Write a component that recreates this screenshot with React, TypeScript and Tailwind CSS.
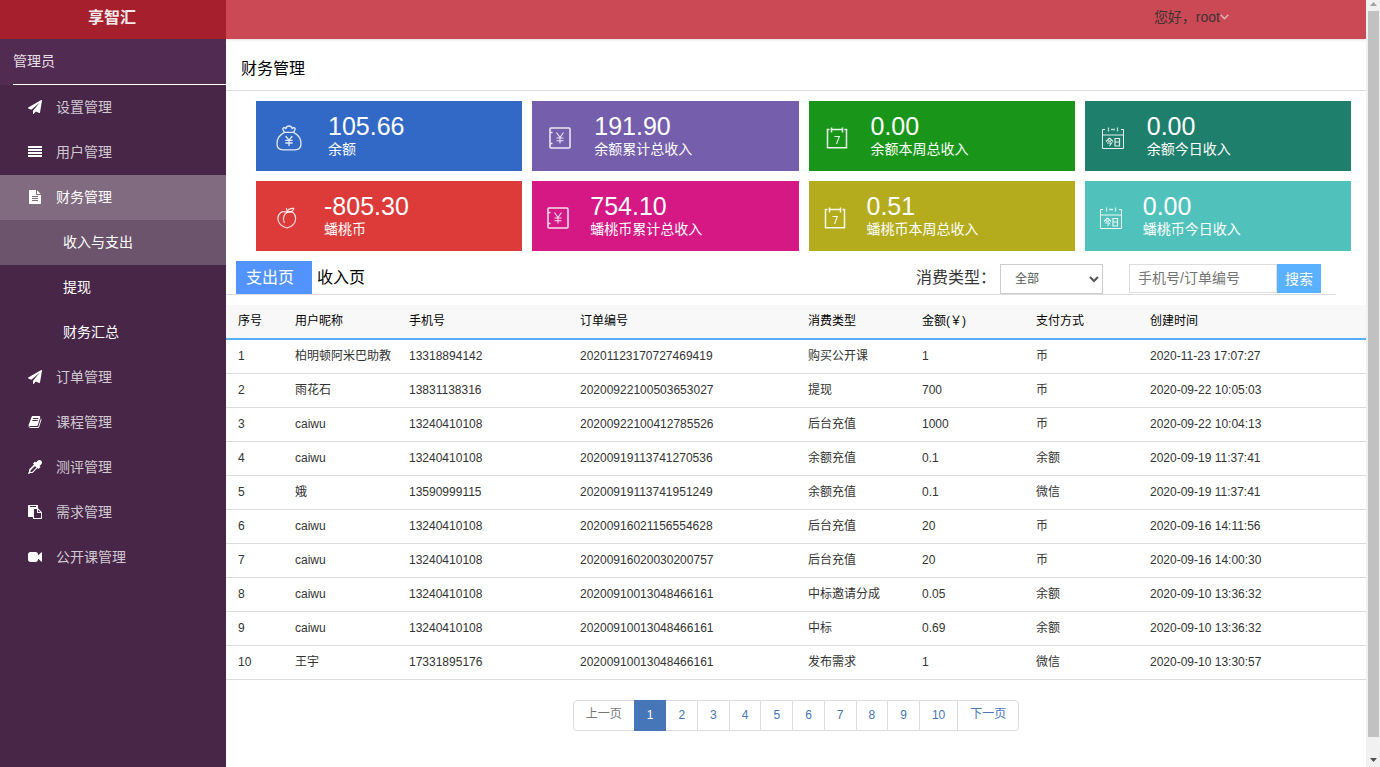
import { useState } from "react"
import type { ReactNode } from "react"

type MenuItem = { label: string; icon: ReactNode; children?: string[] }

function Glyph({ d }: { d: string }) {
    return (
        <svg viewBox="0 0 1792 1792" className="h-4 w-4 shrink-0 p-px" fill="#fff" aria-hidden="true">
            <path d={d} />
        </svg>
    )
}

const plane =
    "M1764 11q33 24 27 64l-256 1536q-5 29-32 45-14 8-31 8-11 0-24-5l-453-185-242 295q-18 23-49 23-13 0-22-4-19-7-30.5-23.5t-11.5-36.5v-349l864-1059-1069 925-395-162q-37-14-40-55-2-40 32-59l1664-960q15-9 32-9 20 0 36 11z"
const lines = "M0 128h1792v256H0zM0 512h1792v256H0zM0 896h1792v256H0zM0 1280h1792v256H0z"
const fileText =
    "M1596 476q14 14 28 36h-472v-472q22 14 36 28zm-476 164h544v1056q0 40-28 68t-68 28h-1344q-40 0-68-28t-28-68v-1600q0-40 28-68t68-28h800v544q0 40 28 68t68 28zm160 736v-64q0-14-9-23t-23-9h-704q-14 0-23 9t-9 23v64q0 14 9 23t23 9h704q14 0 23-9t9-23zm0-256v-64q0-14-9-23t-23-9h-704q-14 0-23 9t-9 23v64q0 14 9 23t23 9h704q14 0 23-9t9-23zm0-256v-64q0-14-9-23t-23-9h-704q-14 0-23 9t-9 23v64q0 14 9 23t23 9h704q14 0 23-9t9-23z"
const book =
    "M1703 478q40 57 18 129l-275 906q-19 64-76.5 107.5t-122.5 43.5h-923q-77 0-148.5-53.5t-99.5-131.5q-24-67-2-127 0-4 3-27t4-37q1-8-3-21.5t-3-19.5q2-11 8-21t16.5-23.5 16.5-23.5q23-38 45-91.5t30-91.5q3-10 .5-30t-.5-28q3-11 17-28t17-23q21-36 42-92t25-90q1-9-2.5-32t.5-28q4-13 22-30.5t22-22.5q19-26 42.5-84.5t27.5-96.5q1-8-3-25.5t-2-26.5q2-8 9-18t18-23 17-21q8-12 16.500-30.500t15-35 16-36 19.500-32 26.500-23.500 36-11.500 47.500 5.500l-1 3q38-9 51-9h761q74 0 114 56t18 130l-274 906q-36 119-71.500 153.500t-128.500 34.500h-869q-27 0-38 15-11 16-1 43 24 70 144 70h923q29 0 56-15.500t35-41.500l300-987q7-22 5-57 38 15 59 43zm-1064 2q-4 13 2 22.500t20 9.500h608q13 0 25.500-9.500t16.500-22.500l21-64q4-13-2-22.500t-20-9.500h-608q-13 0-25.500 9.500t-16.500 22.500zm-83 256q-4 13 2 22.500t20 9.500h608q13 0 25.500-9.500t16.500-22.500l21-64q4-13-2-22.500t-20-9.500h-608q-13 0-25.500 9.500t-16.500 22.500z"
const dropper =
    "M1698 94q94 94 94 226.500t-94 225.500l-225 223 104 104q10 10 10 23t-10 23l-210 210q-10 10-23 10t-23-10l-105-105-603 603q-37 37-90 37h-203l-256 128-64-64 128-256v-203q0-53 37-90l603-603-105-105q-10-10-10-23t10-23l210-210q10-10 23-10t23 10l104 104 223-225q93-94 225.500-94t226.500 94zm-1186 1442l576-576-192-192-576 576v192h192z"
const paste =
    "M768 1664h896v-640h-416q-40 0-68-28t-28-68v-416h-384v1152zm256-1440v-64q0-13-9.500-22.500t-22.500-9.500h-704q-13 0-22.500 9.500t-9.500 22.500v64q0 13 9.500 22.500t22.500 9.500h704q13 0 22.500-9.500t9.500-22.500zm256 672h299l-299-299v299zm512 128v672q0 40-28 68t-68 28h-960q-40 0-68-28t-28-68v-160h-544q-40 0-68-28t-28-68v-1344q0-40 28-68t68-28h1088q40 0 68 28t28 68v328q21 13 36 28l408 408q28 28 48 76t20 88z"
const video =
    "M1792 352v1088q0 42-39 59-13 5-25 5-27 0-45-19l-403-403v166q0 119-84.500 203.500t-203.500 84.500h-704q-119 0-203.500-84.500t-84.500-203.500v-704q0-119 84.500-203.500t203.500-84.500h704q119 0 203.500 84.500t84.500 203.500v165l403-402q18-19 45-19 12 0 25 5 39 17 39 59z"

const menu: MenuItem[] = [
    { label: "设置管理", icon: <Glyph d={plane} /> },
    { label: "用户管理", icon: <Glyph d={lines} /> },
    { label: "财务管理", icon: <Glyph d={fileText} />, children: ["收入与支出", "提现", "财务汇总"] },
    { label: "订单管理", icon: <Glyph d={plane} /> },
    { label: "课程管理", icon: <Glyph d={book} /> },
    { label: "测评管理", icon: <Glyph d={dropper} /> },
    { label: "需求管理", icon: <Glyph d={paste} /> },
    { label: "公开课管理", icon: <Glyph d={video} /> },
]

function BagIcon() {
    return (
        <svg viewBox="0 0 26 26" className="h-[26px] w-[26px]" fill="none" stroke="#fff" strokeOpacity="0.85" strokeWidth="1.3" strokeLinecap="round" strokeLinejoin="round" aria-hidden="true">
            <path d="M8.500 7.400C7.800 5.500 6.200 4.600 6.900 3.300c.8-1 2.200-.6 3 .3C10.300 1.700 11.500 1 13 1s2.700.7 3.100 2.600c.8-.9 2.200-1.300 3-.3.700 1.300-.900 2.200-1.600 4.100zM8.500 7.400C4.500 9.500 1 13.500 1 18.500c0 4 2.500 6.300 6 6.300h12c3.500 0 6-2.300 6-6.300 0-5-3.500-9-7.500-11.100" />
            <path d="m10 11.500 3 3.700 3-3.700M13 15.200v5.300M9.800 15.300h6.400M9.800 18h6.400" />
        </svg>
    )
}

function PeachIcon() {
    return (
        <svg viewBox="0 0 22 24" className="h-[22px] w-5" fill="none" stroke="#fff" strokeOpacity="0.85" strokeWidth="1.3" strokeLinecap="round" strokeLinejoin="round" aria-hidden="true">
            <path d="M11 5.800C5.500 3.300 1 7 1 12.500c0 5.200 4.500 9.300 10 10.500 5.500-1.200 9.500-5.300 9.500-10.500C20.500 7 16.500 3.500 11 5.800z" />
            <path d="M11.500 5.700C7.500 7.500 6 12.500 8 17M11.500 5.700 10.300 1.500M11.500 5.500C12 2.700 15 1.200 18.500 1.500c-1 3-3.500 4.500-7 4z" />
        </svg>
    )
}

function SafeIcon() {
    return (
        <svg viewBox="0 0 22 22" className="h-[22px] w-[22px]" fill="none" stroke="#fff" strokeOpacity="0.85" aria-hidden="true">
            <rect x="1" y="1" width="20" height="20" rx="1" strokeWidth="1.600" />
            <path d="M1.500 5.500h2M1.500 16.500h2" strokeWidth="1.500" />
            <path d="m7.500 5.500 3.500 5 3.500-5M11 10.500v6M7.500 11h7M7.500 13.700h7" strokeWidth="1.100" />
        </svg>
    )
}

function WeekIcon() {
    return (
        <svg viewBox="0 0 22 22" className="h-[22px] w-[22px]" fill="none" stroke="#fff" strokeOpacity="0.9" aria-hidden="true">
            <path d="M3.500 2.500H1.500v18.300h19V2.500h-2M5.500 2.500h11M5.500.500v5M16.500.500v5" strokeWidth="1.500" />
            <path d="M8.500 9.500h4.800L10.500 17" strokeWidth="1.100" />
        </svg>
    )
}

function TodayIcon() {
    return (
        <svg viewBox="0 0 22 22" className="h-[22px] w-[22px]" fill="none" stroke="#fff" aria-hidden="true">
            <path d="M3 2.500H.500v19h21v-19H19" strokeOpacity=".9" />
            <path d="M6.500.500v4M9 2.500h4M15.500.500v4" strokeOpacity=".7" strokeWidth="1.300" />
            <path d="M1 8h20" strokeOpacity=".5" strokeWidth="1.800" />
            <path d="M7.500 11 4 14.500M7.500 11l3.500 3.500M6 14.200h3M5 16h4.500l-2 3M13 11.500h4.500V19H13zM13 15h4.500" strokeOpacity=".85" strokeWidth="1.200" />
        </svg>
    )
}

const cards = [
    { value: "105.66", label: "余额", icon: <BagIcon />, bg: "bg-[#3369c6]", slot: "w-[72px]" },
    { value: "191.90", label: "余额累计总收入", icon: <SafeIcon />, bg: "bg-[#755fac]", slot: "w-[62px]" },
    { value: "0.00", label: "余额本周总收入", icon: <WeekIcon />, bg: "bg-[#19961a]", slot: "w-[62px]" },
    { value: "0.00", label: "余额今日收入", icon: <TodayIcon />, bg: "bg-[#1f7f6d]", slot: "w-[62px]" },
    { value: "-805.30", label: "蟠桃币", icon: <PeachIcon />, bg: "bg-[#dc3b3a]", slot: "w-[68px]" },
    { value: "754.10", label: "蟠桃币累计总收入", icon: <SafeIcon />, bg: "bg-[#d61885]", slot: "w-[58px]" },
    { value: "0.51", label: "蟠桃币本周总收入", icon: <WeekIcon />, bg: "bg-[#b5ac1d]", slot: "w-[58px]" },
    { value: "0.00", label: "蟠桃币今日收入", icon: <TodayIcon />, bg: "bg-[#51c2bb]", slot: "w-[58px]" },
]

const columns = [
    { title: "序号", width: "w-[5%]" },
    { title: "用户昵称", width: "w-[10%]" },
    { title: "手机号", width: "w-[15%]" },
    { title: "订单编号", width: "w-[20%]" },
    { title: "消费类型", width: "w-[10%]" },
    { title: "金额(￥)", width: "w-[10%]" },
    { title: "支付方式", width: "w-[10%]" },
    { title: "创建时间", width: "w-[20%]" },
]

const rows = [
    ["1", "柏明顿阿米巴助教", "13318894142", "20201123170727469419", "购买公开课", "1", "币", "2020-11-23 17:07:27"],
    ["2", "雨花石", "13831138316", "20200922100503653027", "提现", "700", "币", "2020-09-22 10:05:03"],
    ["3", "caiwu", "13240410108", "20200922100412785526", "后台充值", "1000", "币", "2020-09-22 10:04:13"],
    ["4", "caiwu", "13240410108", "20200919113741270536", "余额充值", "0.1", "余额", "2020-09-19 11:37:41"],
    ["5", "娥", "13590999115", "20200919113741951249", "余额充值", "0.1", "微信", "2020-09-19 11:37:41"],
    ["6", "caiwu", "13240410108", "20200916021156554628", "后台充值", "20", "币", "2020-09-16 14:11:56"],
    ["7", "caiwu", "13240410108", "20200916020030200757", "后台充值", "20", "币", "2020-09-16 14:00:30"],
    ["8", "caiwu", "13240410108", "20200910013048466161", "中标邀请分成", "0.05", "余额", "2020-09-10 13:36:32"],
    ["9", "caiwu", "13240410108", "20200910013048466161", "中标", "0.69", "余额", "2020-09-10 13:36:32"],
    ["10", "王宇", "17331895176", "20200910013048466161", "发布需求", "1", "微信", "2020-09-10 13:30:57"],
]

function Sidebar() {
    return (
        <nav className="w-[226px] shrink-0 bg-[#482648] text-sm">
            <div className="bg-[#522b52] pl-[13px] text-[#e6dfe6]">
                <div className="h-[46px] border-b border-white leading-[45px]">管理员</div>
            </div>
            <ul>
                {menu.map((item) => (
                    <li key={item.label}>
                        <a
                            href="#"
                            className={`flex h-[45px] items-center gap-[13px] pb-0.5 pl-[27px] ${item.children ? "bg-[#816b81] text-white" : "text-[#d1c9d1]"}`}
                        >
                            {item.icon}
                            {item.label}
                        </a>
                        {item.children && (
                            <ul>
                                {item.children.map((child, i) => (
                                    <li key={child}>
                                        <a
                                            href="#"
                                            className={`flex h-[45px] items-center pb-0.5 pl-[63px] text-white ${i === 0 ? "bg-[#6d546d]" : ""}`}
                                        >
                                            {child}
                                        </a>
                                    </li>
                                ))}
                            </ul>
                        )}
                    </li>
                ))}
            </ul>
        </nav>
    )
}

function StatCards() {
    return (
        <div className="grid grid-cols-4 gap-[10px] pt-[10px] pr-[15px] pl-[30px]">
            {cards.map((card) => (
                <div key={card.label} className={`flex h-[70px] items-center text-white ${card.bg}`}>
                    <div className={`flex shrink-0 justify-center pt-1 pr-1.5 ${card.slot}`}>{card.icon}</div>
                    <div>
                        <div className="text-[25px] leading-[26px]">{card.value}</div>
                        <div className="text-sm leading-5">{card.label}</div>
                    </div>
                </div>
            ))}
        </div>
    )
}

function Toolbar() {
    const [keyword, setKeyword] = useState("")

    return (
        <div className="mt-[10px] mr-[30px] flex h-[34px] items-start justify-between border-b border-[#ddd] pl-[10px]">
            <div className="flex text-base">
                <button className="h-[33px] w-[76px] bg-[#5393ff] pl-[10px] text-left text-white">支出页</button>
                <button className="h-[33px] px-[5px] text-black">收入页</button>
            </div>
            <div className="flex items-start pt-[3px] pr-[15px]">
                <label htmlFor="type" className="pr-1 text-base leading-[27px] text-[#333]">
                    消费类型：
                </label>
                <select id="type" className="h-[30px] w-[103px] border border-[#ccc] bg-white pl-[10px] text-xs text-[#555]">
                    <option>全部</option>
                    <option>购买公开课</option>
                    <option>提现</option>
                </select>
                <input
                    aria-label="手机号/订单编号"
                    placeholder="手机号/订单编号"
                    value={keyword}
                    onChange={(e) => setKeyword(e.target.value)}
                    className="ml-[26px] h-[29px] w-[148px] border border-[#ddd] px-2 pb-0.5 text-sm text-[#333] placeholder:text-[#757575]"
                />
                <button className="h-[29px] w-11 bg-[#5ab1ff] text-sm text-white">搜索</button>
            </div>
        </div>
    )
}

function OrderTable() {
    return (
        <table className="mt-[10px] w-full table-fixed text-left text-xs text-[#333]">
            <thead>
                <tr className="h-[34px] border-b-2 border-[#5aaffb] bg-[#f8f8f8] text-black">
                    {columns.map((col) => (
                        <th key={col.title} className={`pb-0.5 pl-3 font-normal whitespace-nowrap ${col.width}`}>
                            {col.title}
                        </th>
                    ))}
                </tr>
            </thead>
            <tbody>
                {rows.map((row) => (
                    <tr key={row[0]} className="h-[34px] border-b border-[#ddd]">
                        {row.map((cell, i) => (
                            <td key={i} className="pl-3 whitespace-nowrap">
                                {cell}
                            </td>
                        ))}
                    </tr>
                ))}
            </tbody>
        </table>
    )
}

function Pagination() {
    const [page, setPage] = useState(1)
    const link = "h-[31px] border border-[#ddd] px-3 pb-0.5 text-xs"

    return (
        <div className="flex justify-center py-5">
            <button className={`${link} rounded-l text-[#777]`} onClick={() => setPage(Math.max(1, page - 1))}>
                上一页
            </button>
            {[1, 2, 3, 4, 5, 6, 7, 8, 9, 10].map((n) => (
                <button
                    key={n}
                    onClick={() => setPage(n)}
                    className={`-ml-px h-[31px] border px-3 text-xs ${n === page ? "z-10 border-[#4675b8] bg-[#4675b8] text-white" : "border-[#ddd] text-[#4675b8]"}`}
                >
                    {n}
                </button>
            ))}
            <button className={`${link} -ml-px rounded-r text-[#4675b8]`} onClick={() => setPage(Math.min(10, page + 1))}>
                下一页
            </button>
        </div>
    )
}

function ScrollRail() {
    return (
        <div className="flex w-[14px] shrink-0 flex-col items-center bg-[#f1f1f1]" aria-hidden="true">
            <svg viewBox="0 0 14 11" className="h-[11px] w-[14px]" fill="#a3a3a3">
                <path d="M4 6h7L7.500 2z" />
            </svg>
            <div className="ml-px w-[11px] flex-1 bg-[#c1c1c1]" />
            <svg viewBox="0 0 14 30" className="h-[30px] w-[14px]" fill="#505050">
                <path d="M4 21h7l-3.500 4z" />
            </svg>
        </div>
    )
}

export default function App() {
    return (
        <div className="flex h-screen bg-white font-['Liberation_Sans','Noto_Sans_CJK_SC',sans-serif]">
            <div className="flex min-w-0 flex-1 flex-col">
                <header className="flex h-[39px] shrink-0 shadow-sm">
                    <h1 className="w-[226px] shrink-0 bg-[#a51f2d] pr-0.5 text-center text-base leading-[36px] font-bold text-[#f6e9ea]">享智汇</h1>
                    <div className="flex flex-1 justify-end bg-[#cb4954] pr-[137px]">
                        <button className="flex h-[34px] items-center text-sm text-[#3d3335]">
                            您好，root
                            <svg viewBox="0 0 9 6" className="h-1.5 w-[9px]" fill="none" stroke="#d9b5b8" strokeWidth="1.500" aria-hidden="true">
                                <path d="m.7.700 3.800 4 3.800-4" />
                            </svg>
                        </button>
                    </div>
                </header>
                <div className="flex min-h-0 flex-1">
                    <Sidebar />
                    <main className="min-w-0 flex-1">
                        <h2 className="h-[52px] border-b border-[#ddd] pt-[18px] pl-[15px] text-base text-black">财务管理</h2>
                        <StatCards />
                        <Toolbar />
                        <OrderTable />
                        <Pagination />
                    </main>
                </div>
            </div>
            <ScrollRail />
        </div>
    )
}
